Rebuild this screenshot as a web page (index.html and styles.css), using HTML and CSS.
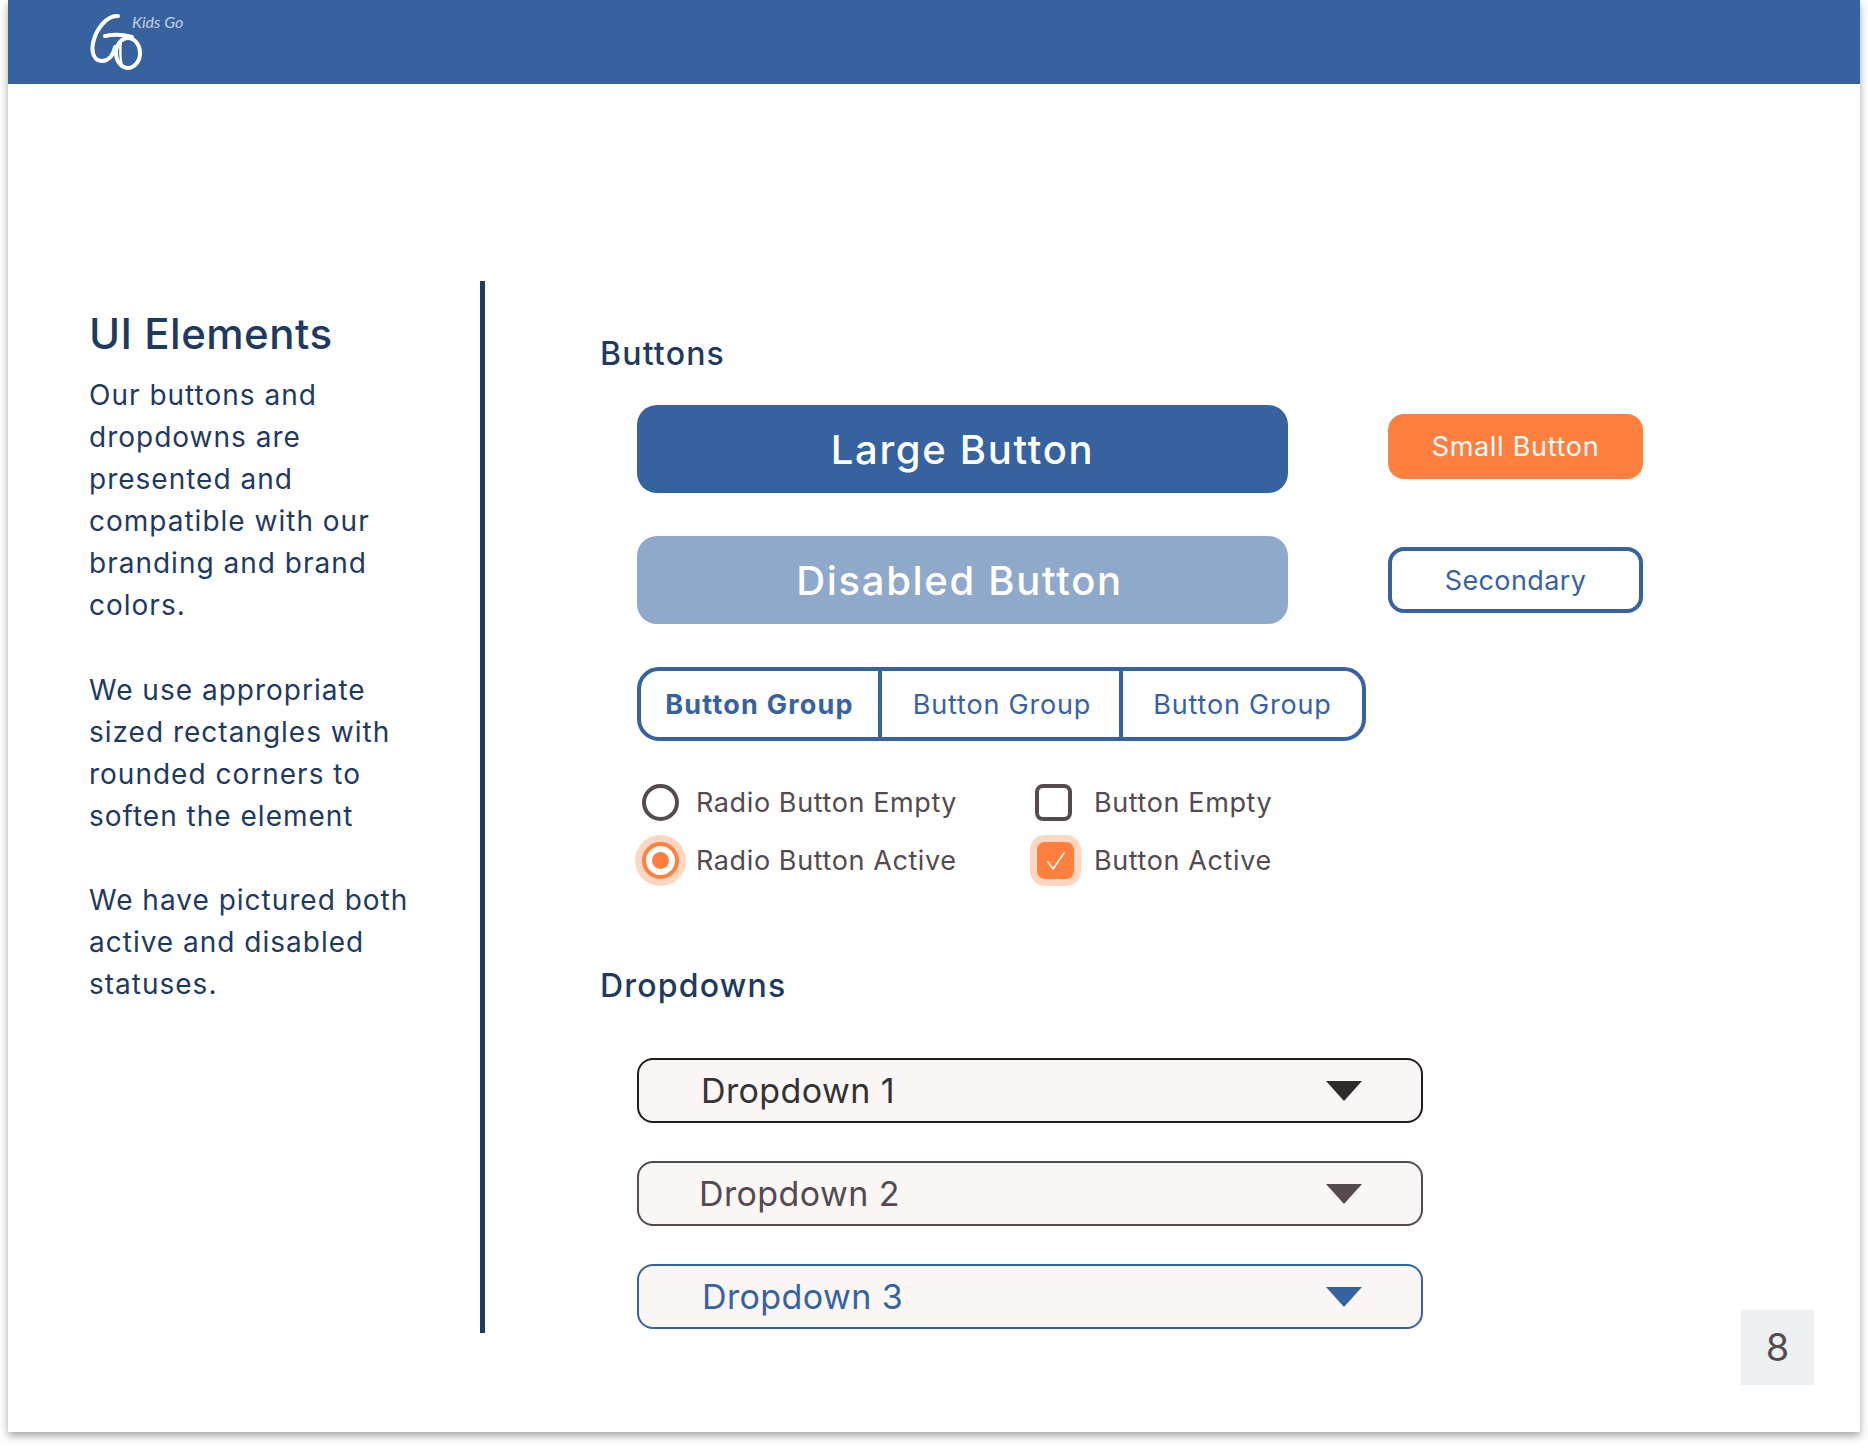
FILE: index.html
```html
<!DOCTYPE html>
<html lang="en">
<head>
    <meta charset="UTF-8">
    <meta name="viewport" content="width=device-width, initial-scale=1.0">
    <title>UI Elements</title>
    <link rel="stylesheet" href="styles.css">
</head>
<body>
    <div class="slide">
        <header class="topbar">
            <div class="logo">
                <svg class="logo-mark" width="56" height="62" viewBox="0 0 56 62" fill="none" stroke="#fff" stroke-width="4" stroke-linecap="round" stroke-linejoin="round">
                    <path d="M30 5C19 4 8 18 5 32C3 43 7 50 14 50C20 50 25 45 27 36"/>
                    <path d="M17 25C26 23 34 23 44 26"/>
                    <ellipse cx="40" cy="42" rx="12" ry="15"/>
                    <path d="M33 29C32 37 32 47 34 56" stroke-width="2.4"/>
                </svg>
                <span class="logo-text">Kids Go</span>
            </div>
        </header>

        <main class="content-row">
            <aside class="intro">
                <h1>UI Elements</h1>
                <p>Our buttons and<br>dropdowns are<br>presented and<br>compatible with our<br>branding and brand<br>colors.</p>
                <p>We use appropriate<br>sized rectangles with<br>rounded corners to<br>soften the element</p>
                <p>We have pictured both<br>active and disabled<br>statuses.</p>
            </aside>

            <section class="elements">
                <h2 class="buttons-title">Buttons</h2>
                <div class="button-row">
                    <button class="btn-large">Large Button</button>
                    <button class="btn-small">Small Button</button>
                </div>
                <div class="button-row second">
                    <button class="btn-large disabled">Disabled Button</button>
                    <button class="btn-secondary">Secondary</button>
                </div>

                <div class="btn-group">
                    <button class="active">Button Group</button>
                    <button class="middle">Button Group</button>
                    <button>Button Group</button>
                </div>

                <div class="options">
                    <div class="option">
                        <span class="radio"></span>
                        <span>Radio Button Empty</span>
                    </div>
                    <div class="option">
                        <span class="checkbox"></span>
                        <span>Button Empty</span>
                    </div>
                    <div class="option">
                        <span class="radio on"></span>
                        <span>Radio Button Active</span>
                    </div>
                    <div class="option">
                        <span class="checkbox on">
                            <svg width="22" height="22" viewBox="0 0 22 22" fill="none" stroke="#fff" stroke-width="1.6" stroke-linecap="round" stroke-linejoin="round"><path d="M3 12L8 19L19 3"/></svg>
                        </span>
                        <span>Button Active</span>
                    </div>
                </div>

                <h2 class="dropdowns-title">Dropdowns</h2>
                <div class="dropdown first">
                    <span>Dropdown 1</span>
                    <span class="arrow"></span>
                </div>
                <div class="dropdown muted">
                    <span>Dropdown 2</span>
                    <span class="arrow"></span>
                </div>
                <div class="dropdown blue">
                    <span>Dropdown 3</span>
                    <span class="arrow"></span>
                </div>
            </section>

            <div class="page-number">8</div>
        </main>
    </div>
</body>
</html>
```

FILE: styles.css
```css
body {
    margin: 0;
    min-height: 1448px;
    background-color: #fff;
    font-family: Inter, "Liberation Sans", sans-serif;
}
.slide {
    width: 1852px;
    height: 1432px;
    margin-left: 8px;
    background-color: #fff;
    box-shadow: 0 4px 8px rgba(0,0,0,0.35);
}
.topbar {
    height: 84px;
    background-color: #36639F;
    padding-left: 80px;
}
.logo {
    display: flex;
    align-items: flex-start;
    padding-top: 11px;
}
.logo-text {
    margin: 1px 0 0 -12px;
    font-family: Lato, sans-serif;
    font-style: italic;
    font-size: 16px;
    color: rgba(255,255,255,0.7);
}
.content-row {
    display: flex;
    align-items: flex-start;
    padding-top: 197px;
}
.intro {
    flex: none;
    box-sizing: border-box;
    width: 477px;
    height: 1052px;
    padding-left: 81px;
    border-right: 5px solid #1F3A5F;
    color: #1F3A5F;
}
.intro h1 {
    margin: 29px 0 0;
    font-size: 42px;
    line-height: 48px;
    font-weight: 500;
    letter-spacing: 0.5px;
}
.intro p {
    margin: 0 0 42.5px;
    font-size: 28px;
    line-height: 42px;
    letter-spacing: 1px;
}
.intro h1 + p {
    margin-top: 16px;
}
.elements {
    flex: none;
    box-sizing: border-box;
    width: 965px;
    padding: 55px 0 0 115px;
}
h2 {
    margin: 0;
    font-size: 32px;
    line-height: 36px;
    font-weight: 500;
    letter-spacing: 1.2px;
    color: #1F3A5F;
}
.button-row {
    display: flex;
    align-items: flex-start;
    gap: 100px;
    margin: 33px 0 0 37px;
}
.button-row.second {
    margin-top: 43px;
}
button {
    flex: none;
    font-family: inherit;
    border: none;
    background: none;
    padding: 0;
}
.btn-large {
    width: 651px;
    height: 88px;
    border-radius: 20px;
    background-color: #36639F;
    color: white;
    font-size: 40px;
    font-weight: 500;
    letter-spacing: 1.7px;
}
.btn-large.disabled {
    padding-right: 6px;
    background-color: #8FA9CA;
}
.btn-small {
    width: 255px;
    height: 65px;
    margin-top: 9px;
    border-radius: 16px;
    background-color: #FF7F3F;
    color: white;
    font-size: 27px;
    letter-spacing: 0.7px;
}
.btn-secondary {
    box-sizing: border-box;
    width: 255px;
    height: 66px;
    margin-top: 11px;
    border: 4px solid #36639F;
    border-radius: 16px;
    background-color: white;
    color: #36639F;
    font-size: 27px;
    letter-spacing: 0.4px;
}
.btn-group {
    display: flex;
    box-sizing: border-box;
    width: 729px;
    height: 74px;
    margin: 43px 0 0 37px;
    border: 4px solid #36639F;
    border-radius: 22px;
}
.btn-group button {
    flex: 1;
    color: #36639F;
    font-size: 27px;
    letter-spacing: 0.8px;
    border-left: 4px solid #36639F;
}
.btn-group button.active {
    flex: none;
    width: 237px;
    border-left: none;
    font-weight: 700;
    letter-spacing: 1.2px;
}
.btn-group button.middle {
    flex: none;
    width: 241px;
    padding-left: 3px;
}
.options {
    display: grid;
    grid-template-columns: 398px auto;
    row-gap: 21px;
    margin: 43px 0 0 37px;
}
.option {
    display: flex;
    align-items: center;
    gap: 14px;
    height: 37px;
    color: #544A50;
    font-size: 27px;
    letter-spacing: 0.6px;
}
.radio {
    box-sizing: border-box;
    width: 37px;
    height: 37px;
    margin: 0 3px 0 5px;
    border: 4px solid #544A50;
    border-radius: 50%;
}
.radio.on {
    border-color: #FF7F3F;
    background-color: #FF7F3F;
    background-clip: content-box;
    padding: 6px;
    box-shadow: 0 0 0 7px #FFD6C0;
}
.checkbox {
    box-sizing: border-box;
    display: flex;
    align-items: center;
    justify-content: center;
    width: 37px;
    height: 37px;
    margin-right: 8px;
    border: 4px solid #544A50;
    border-radius: 8px;
}
.checkbox.on {
    border: none;
    background-color: #FF7F3F;
    box-shadow: 0 0 0 7px #FFD6C0;
    margin-left: 2px;
    margin-right: 6px;
}
.dropdowns-title {
    margin-top: 89px;
}
.dropdown {
    display: flex;
    align-items: center;
    justify-content: space-between;
    box-sizing: border-box;
    width: 786px;
    height: 65px;
    margin: 38px 0 0 37px;
    padding: 0 59px 0 62px;
    border: 2px solid #1E1E1E;
    border-radius: 16px;
    background-color: #F9F6F5;
    color: #333;
    font-size: 34px;
    letter-spacing: 0.4px;
}
.dropdown.first {
    margin-top: 54px;
}
.dropdown .arrow {
    width: 0;
    height: 0;
    border-left: 18px solid transparent;
    border-right: 18px solid transparent;
    border-top: 20px solid #2B2B2B;
}
.dropdown.muted {
    padding-left: 60px;
    border-color: #544A50;
    color: #544A50;
}
.dropdown.muted .arrow {
    border-top-color: #544A50;
}
.dropdown.blue {
    padding-left: 63px;
    border-color: #36639F;
    color: #36639F;
}
.dropdown.blue .arrow {
    border-top-color: #36639F;
}
.page-number {
    flex: none;
    width: 73px;
    height: 75px;
    margin: 1029px 0 0 291px;
    background-color: #ECF0F1;
    color: #544A50;
    font-size: 38px;
    line-height: 75px;
    text-align: center;
}
```
